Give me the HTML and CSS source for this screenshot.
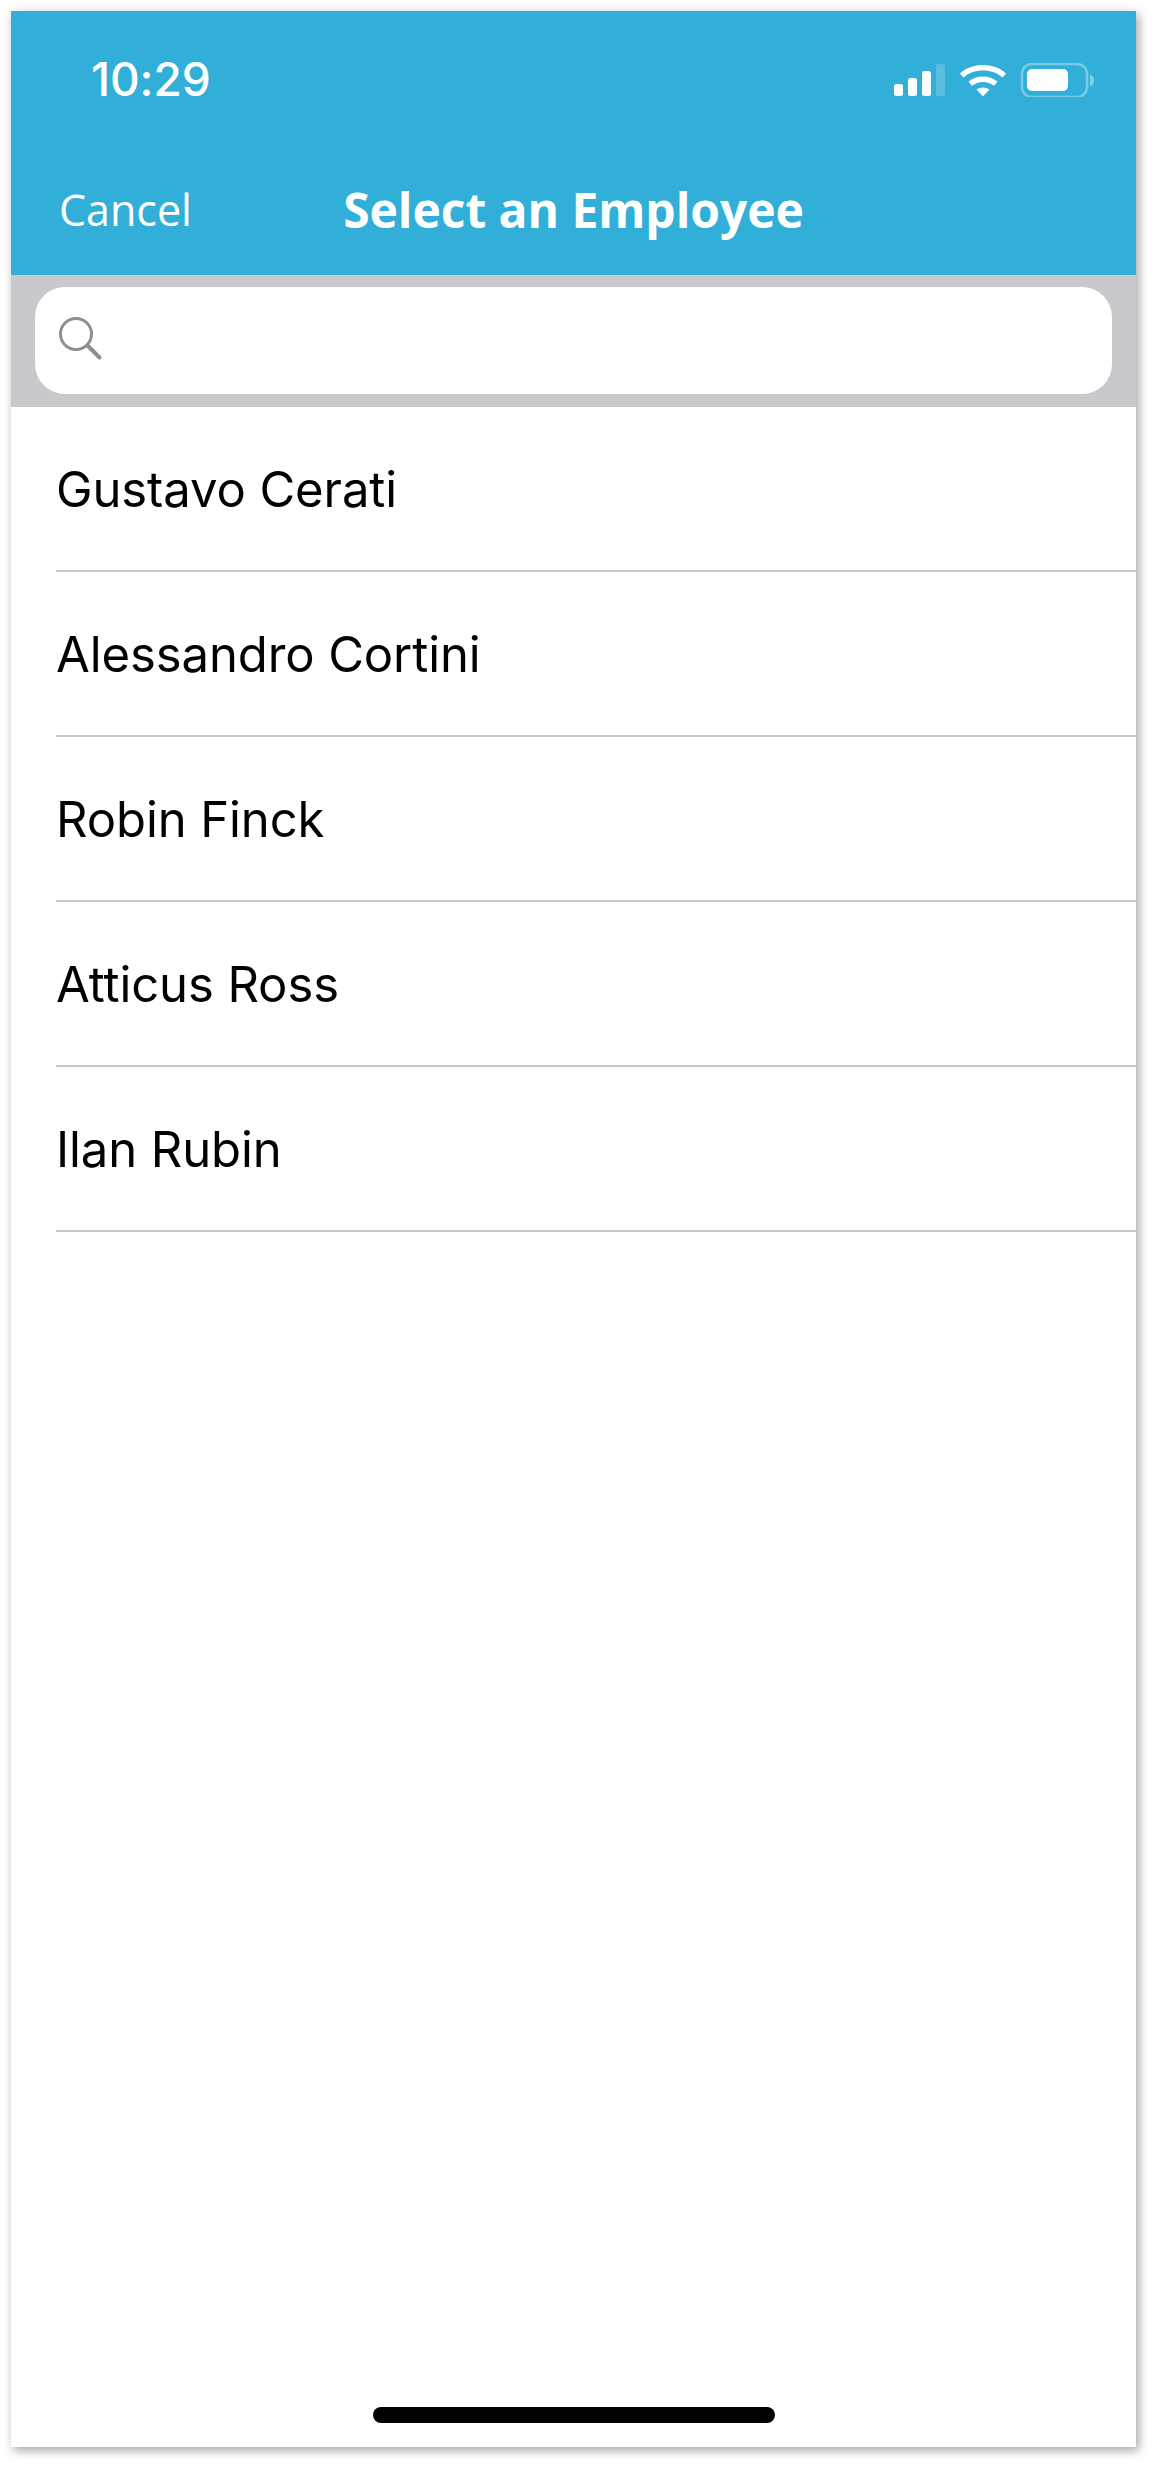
FILE: index.html
```html
<!DOCTYPE html>
<html lang="en">
<head>
<meta charset="utf-8">
<title>Select an Employee</title>
<link rel="stylesheet" href="styles.css">
</head>
<body>
<main class="screen">
  <header class="header">
    <div class="status">
      <span class="time">10:29</span>
      <svg class="status-icons" width="200" height="34" viewBox="0 0 200 34" aria-hidden="true">
        <rect x="0" y="21" width="9" height="12" rx="2.5" fill="#fff"/>
        <rect x="14" y="15" width="9" height="18" rx="2.5" fill="#fff"/>
        <rect x="28" y="8" width="9" height="25" rx="2.5" fill="#fff"/>
        <rect x="42" y="1" width="9" height="32" rx="2.5" fill="#fff" fill-opacity=".2"/>
        <path d="M66 10.5C77.5 -1 100.5 -1 112 10.5L108.500 14.500C99 5 79 5 69.500 14.500Z" fill="#fff"/>
        <path d="M74.500 18.800C82 11.800 96 11.800 103.500 18.800L100 22.800C94 17.600 84 17.600 78 22.800Z" fill="#fff"/>
        <path d="M82.500 26.500C86 23.700 92 23.700 95.500 26.500L89 33.500Z" fill="#fff"/>
        <rect x="128" y="1" width="65" height="33" rx="10" fill="none" stroke="#fff" stroke-opacity=".35" stroke-width="2.500"/>
        <rect x="133" y="6" width="41" height="22" rx="5" fill="#fff"/>
        <path d="M196 11.500V23.500C199 22.500 200 20 200 17.500S199 12.500 196 11.500Z" fill="#fff" fill-opacity=".4"/>
      </svg>
    </div>
    <nav class="nav">
      <span class="cancel">Cancel</span>
      <h1 class="title">Select an Employee</h1>
      <span class="nav-spacer"></span>
    </nav>
  </header>
  <div class="search-band">
    <div class="search">
      <svg class="search-icon" width="44" height="44" viewBox="0 0 44 44" aria-hidden="true">
        <circle cx="17" cy="17" r="15.500" fill="none" stroke="#8e8e93" stroke-width="3"/>
        <path d="M28.500 28.500L40.500 40.500" fill="none" stroke="#8e8e93" stroke-width="4" stroke-linecap="round"/>
      </svg>
    </div>
  </div>
  <ul class="list">
    <li class="row"><span class="name">Gustavo Cerati</span></li>
    <li class="row"><span class="name">Alessandro Cortini</span></li>
    <li class="row"><span class="name">Robin Finck</span></li>
    <li class="row"><span class="name">Atticus Ross</span></li>
    <li class="row"><span class="name">Ilan Rubin</span></li>
  </ul>
  <div class="home-indicator"></div>
</main>
</body>
</html>
```
FILE: styles.css
```css
* { box-sizing: border-box; }
html, body { margin: 0; padding: 0; background: #fff; }
body { padding: 11px 19px 19px 11px; height: 2466px; overflow: hidden; }
.screen {
  width: 1125px;
  height: 2436px;
  background: #fff;
  display: flex;
  flex-direction: column;
  box-shadow: 3px 4px 9px rgba(0, 0, 0, .3), 0 0 14px rgba(0, 0, 0, .07);
}
.header { background: #31afd8; height: 264px; color: #fff; flex: none; }
.status { height: 130px; display: flex; justify-content: space-between; align-items: flex-start; padding: 40px 42px 0 80px; }
.time { font: 500 46px/56px Inter, sans-serif; letter-spacing: -.1px; }
.status-icons { margin-top: 12px; display: block; }
.nav { display: grid; grid-template-columns: 1fr auto 1fr; align-items: center; height: 80px; margin-top: 29px; }
.cancel { font: 500 43px/56px "Open Sans", sans-serif; margin-left: 48px; }
.title { margin: 0; font: 700 48px/60px "Open Sans", sans-serif; letter-spacing: -.05px; }
.search-band { background: #c9c8cd; height: 132px; padding: 12px 24px 12px 24px; flex: none; }
.search { height: 107px; background: #fff; border-radius: 30px; display: flex; align-items: center; padding: 0 0 3px 24px; }
.search-icon { display: block; }
.list { list-style: none; margin: 0; padding: 0 0 0 45px; flex: 1; }
.row { height: 165px; border-bottom: 2px solid #c9c8cd; display: flex; align-items: center; padding-top: 2px; font: 400 49px/60px Inter, sans-serif; letter-spacing: -.1px; color: #000; }
.home-indicator { width: 402px; height: 16px; border-radius: 8px; background: #000; margin: 0 auto 24px; flex: none; }
```
